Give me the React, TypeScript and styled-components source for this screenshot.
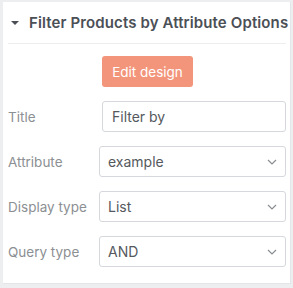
import styled, { createGlobalStyle } from 'styled-components';

const GlobalStyle = createGlobalStyle`
    html, body {
        margin: 0;
        padding: 0;
        background: #eceef0;
    }
    body {
        font-family: Inter, 'Noto Sans', sans-serif;
    }
`;

const fields = [
    { label: 'Attribute', value: 'example' },
    { label: 'Display type', value: 'List' },
    { label: 'Query type', value: 'AND' },
];

const Chevron = () => (
    <svg width="10" height="6" viewBox="0 0 10 6" fill="none">
        <path d="M1 1l4 4 4-4" stroke="#8a8d91" strokeWidth="1.2" />
    </svg>
);

export default function App() {
    return (
        <>
            <GlobalStyle />
            <StyledPanel>
                <StyledHeader>
                    <StyledCaret />
                    <StyledTitle>Filter Products by Attribute Options</StyledTitle>
                </StyledHeader>
                <StyledBody>
                    <StyledButtonRow>
                        <StyledButton>Edit design</StyledButton>
                    </StyledButtonRow>
                    <StyledRow>
                        <StyledLabel>Title</StyledLabel>
                        <StyledInput defaultValue="Filter by" $offset={3} />
                    </StyledRow>
                    {fields.map((f) => (
                        <StyledRow key={f.label}>
                            <StyledLabel>{f.label}</StyledLabel>
                            <StyledSelect>
                                <span>{f.value}</span>
                                <Chevron />
                            </StyledSelect>
                        </StyledRow>
                    ))}
                </StyledBody>
            </StyledPanel>
        </>
    );
}

const StyledPanel = styled.div`
    box-sizing: border-box;
    margin: 2px 2px 0 3px;
    width: 288px;
    height: 282px;
    background: #ffffff;
    border-right: 1px solid #e3e5e8;
    border-bottom: 1px solid #e3e5e8;
    padding: 0 4px 0 5px;
`;

const StyledHeader = styled.div`
    display: flex;
    align-items: center;
    height: 41px;
    border-bottom: 1px solid #eceef0;
    padding-left: 3px;
`;

const StyledCaret = styled.span`
    width: 0;
    height: 0;
    border-left: 4px solid transparent;
    border-right: 4px solid transparent;
    border-top: 4px solid #4b4f56;
    margin-right: 10px;
    margin-top: 1px;
`;

const StyledTitle = styled.div`
    font-size: 15px;
    font-weight: 600;
    letter-spacing: 0.12px;
    color: #4b4f56;
    white-space: nowrap;
`;

const StyledBody = styled.div`
    display: flex;
    flex-direction: column;
    gap: 14px;
    padding-top: 12px;
`;

const StyledButtonRow = styled.div`
    display: flex;
    justify-content: center;
    padding-left: 1px;
`;

const StyledButton = styled.button`
    width: 91px;
    height: 31px;
    border: none;
    border-radius: 3px;
    background: #f3957b;
    color: #ffffff;
    font-family: inherit;
    font-size: 13.5px;
    font-weight: 400;
    padding: 0;
`;

const StyledRow = styled.div`
    display: flex;
    align-items: center;
    height: 31px;
`;

const StyledLabel = styled.div`
    width: 91px;
    flex-shrink: 0;
    font-size: 13.5px;
    color: #8c8f93;
`;

const StyledInput = styled.input<{ $offset?: number }>`
    box-sizing: border-box;
    flex: 1;
    min-width: 0;
    height: 31px;
    margin-left: ${(p) => p.$offset ?? 0}px;
    border: 1px solid #d5d8dc;
    border-radius: 3px;
    padding: 0 9px;
    font-family: inherit;
    font-size: 14px;
    color: #55595e;
    outline: none;
`;

const StyledSelect = styled.div`
    box-sizing: border-box;
    flex: 1;
    height: 31px;
    display: flex;
    align-items: center;
    justify-content: space-between;
    border: 1px solid #d5d8dc;
    border-radius: 3px;
    padding: 0 8px 0 8px;
    font-size: 14px;
    color: #55595e;
`;
